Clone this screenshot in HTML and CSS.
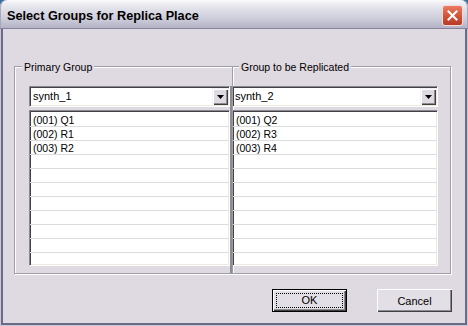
FILE: index.html
```html
<!DOCTYPE html>
<html>
<head>
    <title>Select Groups for Replica Place</title>
    <link rel="stylesheet" href="styles.css">
</head>
<body>
    <div class="window">
        <div class="titlebar">
            <span class="title">Select Groups for Replica Place</span>
            <div class="close">
                <svg width="11" height="11" viewBox="0 0 11 11">
                    <path d="M1.5 1.5 L9.5 9.5 M9.5 1.5 L1.5 9.5" stroke="#fff" stroke-width="2" stroke-linecap="square"/>
                </svg>
            </div>
        </div>

        <div class="body">
            <div class="groups">
                <div class="group group-left">
                    <span class="legend">Primary Group</span>
                    <div class="pane">
                        <div class="combo">
                            <span class="combo-text">synth_1</span>
                            <div class="drop">
                                <svg width="7" height="4" viewBox="0 0 7 4"><polygon points="0,0 7,0 3.5,4" fill="#000"/></svg>
                            </div>
                        </div>
                        <div class="list">
                            <div class="row">(001) Q1</div>
                            <div class="row">(002) R1</div>
                            <div class="row">(003) R2</div>
                            <div class="row"></div>
                            <div class="row"></div>
                            <div class="row"></div>
                            <div class="row"></div>
                            <div class="row"></div>
                            <div class="row"></div>
                            <div class="row"></div>
                            <div class="row"></div>
                        </div>
                    </div>
                    <div class="split-bar"></div>
                </div>

                <div class="group group-right">
                    <span class="legend">Group to be Replicated</span>
                    <div class="pane">
                        <div class="combo">
                            <span class="combo-text">synth_2</span>
                            <div class="drop">
                                <svg width="7" height="4" viewBox="0 0 7 4"><polygon points="0,0 7,0 3.5,4" fill="#000"/></svg>
                            </div>
                        </div>
                        <div class="list">
                            <div class="row">(001) Q2</div>
                            <div class="row">(002) R3</div>
                            <div class="row">(003) R4</div>
                            <div class="row"></div>
                            <div class="row"></div>
                            <div class="row"></div>
                            <div class="row"></div>
                            <div class="row"></div>
                            <div class="row"></div>
                            <div class="row"></div>
                            <div class="row"></div>
                        </div>
                    </div>
                </div>
            </div>

            <div class="buttons">
                <button class="btn btn-default"><span class="focus">OK</span></button>
                <button class="btn">Cancel</button>
            </div>
        </div>
    </div>
</body>
</html>
```

FILE: styles.css
```css
html {
    background: #3b6f9e;
}
body {
    margin: 0;
    font-family: "Liberation Sans", Arial, sans-serif;
    font-size: 11px;
    color: #000;
}
.window {
    width: 468px;
    height: 326px;
    display: flex;
    flex-direction: column;
    background: #c9c7d6;
    border-radius: 7px 7px 0 0;
}

/* title bar */
.titlebar {
    height: 28px;
    display: flex;
    border-bottom: 1px solid #85849c;
    border-radius: 7px 7px 0 0;
    background: linear-gradient(#fdfdfe 0, #efeff4 3px, #dedee7 10px, #cdccda 19px, #b6b5c8 27px);
    box-shadow: inset 1px 0 #a8a7bb, inset -1px 0 #a8a7bb;
}
.title {
    flex: 1;
    margin: 9px 0 0 7px;
    font-weight: bold;
    font-size: 12.7px;
    line-height: 15px;
}
.close {
    width: 19px;
    height: 19px;
    margin: 5px 5px 0 0;
    border: 1px solid #f4dcd6;
    border-radius: 3px;
    background: linear-gradient(#ea7b62, #d05338 55%, #b93a26);
    display: flex;
    align-items: center;
    justify-content: center;
}

/* dialog body */
.body {
    flex: 1;
    margin: 0 1px 1px;
    border: 2px solid #6c6b85;
    border-top: 0;
    background: #dfd9e1;
    padding: 37px 13px 0 11px;
}
.groups {
    display: flex;
    height: 208px;
}
.group {
    position: relative;
    display: flex;
    border: 1px solid #9f9da6;
    box-shadow: inset 1px 1px #fff, 1px 1px #fff;
}
.group-left {
    border-right: 0;
    padding: 19px 0 0 14px;
}
.group-right {
    padding: 19px 12px 0 0;
}
.legend {
    position: absolute;
    top: -6px;
    left: 7px;
    padding: 0 2px;
    font-size: 10.5px;
    line-height: 13px;
    background: #dfd9e1;
}
.group-right .legend {
    left: 6px;
}
.pane {
    width: 201px;
}
.group-right .pane {
    width: 205px;
}
.split-bar {
    width: 2px;
    background: #8d8c94;
}

/* combo box */
.combo {
    height: 17px;
    display: flex;
    padding: 1px;
    border: 1px solid;
    border-color: #8a8893 #fff #fff #8a8893;
    box-shadow: inset 1px 1px #424242, inset -1px -1px #ebe9e0;
    background: #fff;
}
.group-right .combo {
    border-left: 0;
    padding-left: 0;
}
.combo-text {
    flex: 1;
    padding-left: 2px;
    line-height: 17px;
}
.drop {
    width: 16px;
    display: flex;
    align-items: center;
    justify-content: center;
    background: #dfd9e1;
    box-shadow: inset 1px 1px #f2f0f4, inset 2px 2px #fff, inset -1px -1px #404040, inset -2px -2px #8d8c94;
}

/* list box */
.list {
    height: 156px;
    box-sizing: border-box;
    margin-top: 3px;
    padding-top: 2px;
    overflow: hidden;
    border: 1px solid;
    border-color: #8a8893 #fff #fff #8a8893;
    box-shadow: inset 1px 1px #424242, inset -1px -1px #ebe9e0;
    background: #fff;
}
.group-right .list {
    border-left: 0;
}
.row {
    height: 13px;
    line-height: 15px;
    padding-left: 3px;
    font-size: 10.5px;
    border-bottom: 1px solid #dcdcdc;
    white-space: nowrap;
}

/* buttons */
.buttons {
    display: flex;
    justify-content: flex-end;
    gap: 30px;
    margin-top: 15px;
}
.btn {
    width: 75px;
    height: 23px;
    box-sizing: border-box;
    padding: 0;
    border: 0;
    font-family: "Liberation Sans", Arial, sans-serif;
    font-size: 11px;
    color: #000;
    background: #e3dfe6;
    box-shadow: inset 1px 1px #fff, inset -1px -1px #404040, inset -2px -2px #8d8c94;
}
.btn-default {
    border: 1px solid #000;
    padding: 3px;
}
.focus {
    display: block;
    height: 100%;
    box-sizing: border-box;
    border: 1px dotted #000;
    line-height: 13px;
}
```
